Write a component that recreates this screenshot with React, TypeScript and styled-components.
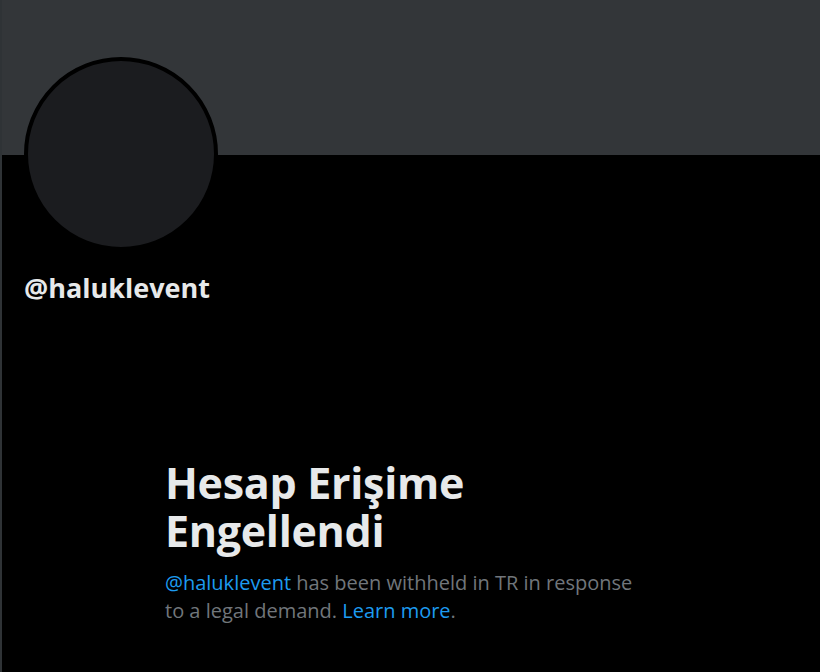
import styled, { createGlobalStyle } from "styled-components";

const GlobalStyle = createGlobalStyle`
  html, body {
    margin: 0;
    padding: 0;
    background: #000;
  }
  body {
    font-family: "Open Sans", "Noto Sans", sans-serif;
  }
`;

const ProfilePage = () => {
  return (
    <Page>
      <GlobalStyle />
      <Banner />
      <Header>
        <Avatar />
        <Handle>@haluklevent</Handle>
      </Header>
      <Notice>
        <Heading>Hesap Erişime Engellendi</Heading>
        <Message>
          <Link>@haluklevent</Link> has been withheld in TR in response to a
          legal demand. <Link>Learn more</Link>.
        </Message>
      </Notice>
    </Page>
  );
};

export default ProfilePage;

const Page = styled.div`
  width: 100%;
  min-height: 672px;
  background: #000;
  border-left: 2px solid #2f3336;
  box-sizing: border-box;
  display: flex;
  flex-direction: column;
`;

const Banner = styled.div`
  height: 155px;
  background-color: #333639;
`;

const Header = styled.div`
  padding: 0 22px;
  display: flex;
  flex-direction: column;
  align-items: flex-start;
`;

const Avatar = styled.div`
  width: 186px;
  height: 186px;
  margin-top: -98px;
  border-radius: 50%;
  border: 4px solid #000;
  background-color: #1b1c1f;
`;

const Handle = styled.div`
  margin-top: 19px;
  color: #e7e9ea;
  font-size: 27px;
  font-weight: 700;
  line-height: 36px;
`;

const Notice = styled.div`
  width: 490px;
  margin: 153px auto 0;
  padding-right: 2px;
`;

const Heading = styled.div`
  color: #e7e9ea;
  font-size: 43px;
  font-weight: 700;
  line-height: 48px;
  letter-spacing: -0.3px;
`;

const Message = styled.div`
  margin-top: 14px;
  color: #71767b;
  font-size: 20px;
  line-height: 28px;
`;

const Link = styled.span`
  color: #1d9bf0;
`;
